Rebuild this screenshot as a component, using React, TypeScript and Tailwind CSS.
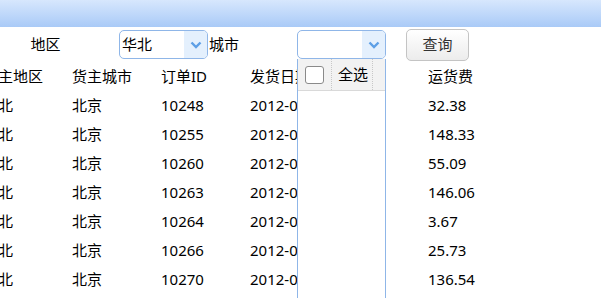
const rows = [
  { region: "华北", city: "北京", id: "10248", date: "2012-07-04", fee: "32.38" },
  { region: "华北", city: "北京", id: "10255", date: "2012-07-12", fee: "148.33" },
  { region: "华北", city: "北京", id: "10260", date: "2012-07-19", fee: "55.09" },
  { region: "华北", city: "北京", id: "10263", date: "2012-07-23", fee: "146.06" },
  { region: "华北", city: "北京", id: "10264", date: "2012-07-24", fee: "3.67" },
  { region: "华北", city: "北京", id: "10266", date: "2012-07-26", fee: "25.73" },
  { region: "华北", city: "北京", id: "10270", date: "2012-08-01", fee: "136.54" },
];

function Chevron() {
  return (
    <svg width="12" height="8" viewBox="0 0 12 8">
      <path d="M1.5 1.5 L6 6 L10.5 1.5" fill="none" stroke="#5d9fe6" strokeWidth="2.4" />
    </svg>
  );
}

function Select({ value }: { value?: string }) {
  return (
    <div className="flex h-[29px] w-[89px] overflow-hidden rounded-[5px] border border-[#8fb6e8] bg-white">
      <span className="flex-1 pl-[2px] leading-[27px]">{value}</span>
      <span className="flex w-[23px] items-center justify-center bg-[#e4f0fd]">
        <Chevron />
      </span>
    </div>
  );
}

export default function App() {
  return (
    <div className="relative h-[298px] w-[601px] overflow-hidden bg-white text-[15px] text-black [font-family:'Noto_Sans','Noto_Sans_CJK_SC',sans-serif]">
      <div className="h-[27px] bg-gradient-to-b from-[#d7e7fd] to-[#a9caf7]" />

      <div className="flex h-[35px] items-center">
        <span className="w-[91px] text-center">地区</span>
        <div className="ml-[28px]">
          <Select value="华北" />
        </div>
        <span className="w-[89px] pl-px">城市</span>
        <Select />
        <button className="ml-[20px] h-[32px] w-[63px] rounded-[5px] border border-[#c4c4c4] bg-gradient-to-b from-white to-[#ececec] text-[#333]">
          查询
        </button>
      </div>

      <div className="ml-[-17px]">
        <div className="grid h-[29px] grid-cols-[89px_89px_89px_89px_89px_89px] items-center whitespace-nowrap">
          <span>货主地区</span>
          <span>货主城市</span>
          <span>订单ID</span>
          <span>发货日期</span>
          <span></span>
          <span>运货费</span>
        </div>
        {rows.map((r) => (
          <div key={r.id} className="grid h-[29px] grid-cols-[89px_89px_89px_89px_89px_89px] items-center whitespace-nowrap">
            <span>{r.region}</span>
            <span>{r.city}</span>
            <span>{r.id}</span>
            <span>{r.date}</span>
            <span></span>
            <span>{r.fee}</span>
          </div>
        ))}
      </div>

      <div className="absolute left-[297px] top-[59px] h-[260px] w-[89px] border-x border-[#8fb6e8] bg-white">
        <div className="flex h-[32px] items-center border-b border-[#d9d9d9] bg-[#f2f2f2]">
          <span className="ml-[7px] h-[18px] w-[19px] rounded-[3px] border border-[#8a8a8a] bg-white" />
          <span className="ml-[7px] h-full border-l border-dotted border-[#c8c8c8]" />
          <span className="ml-[6px] w-[34px]">全选</span>
          <span className="h-full border-l border-dotted border-[#c8c8c8]" />
        </div>
      </div>
    </div>
  );
}
